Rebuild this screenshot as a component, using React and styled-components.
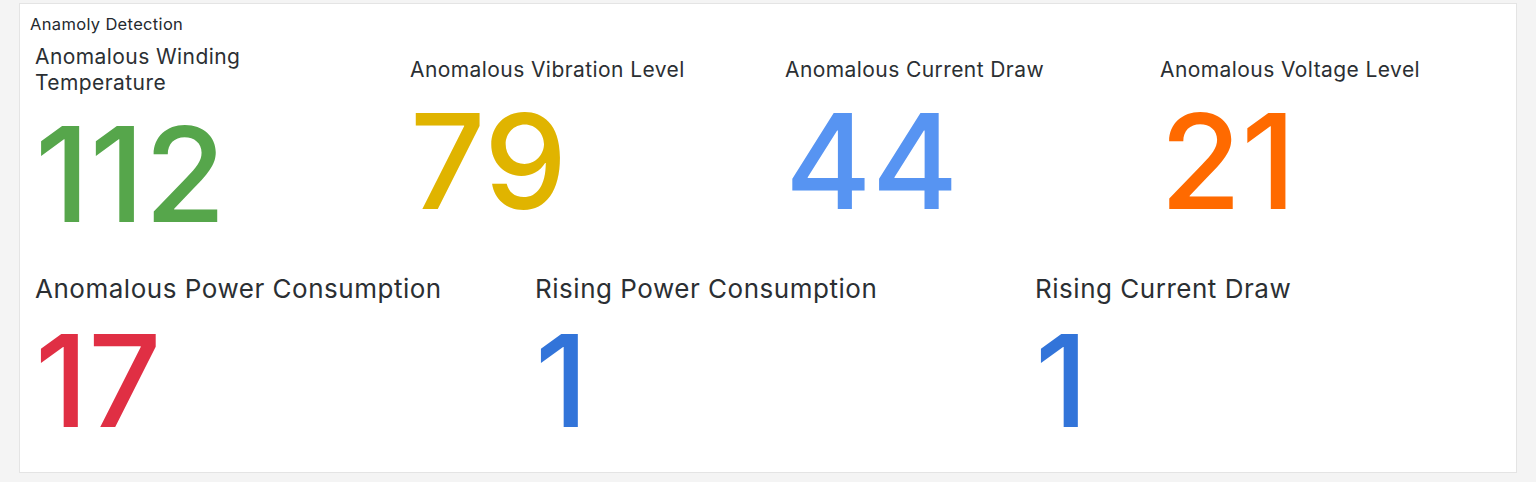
import styled, { createGlobalStyle } from 'styled-components';

const GlobalStyle = createGlobalStyle`
    html, body {
        margin: 0;
        padding: 0;
        background: #f4f4f4;
    }
    body {
        font-family: Inter, "Noto Sans", "Liberation Sans", sans-serif;
        color: #24292e;
    }
`;

const Page = styled.div`
    height: 482px;
    padding: 3px 0 0 19px;
    box-sizing: border-box;
    background: #f4f4f4;
`;

const Panel = styled.section`
    width: 1498px;
    height: 470px;
    box-sizing: border-box;
    background: #ffffff;
    border: 1px solid #e4e4e4;
    display: flex;
    flex-direction: column;
`;

const Title = styled.h2`
    margin: 0;
    padding: 10px 0 0 10px;
    height: 30px;
    box-sizing: border-box;
    font-size: 16.5px;
    line-height: 20px;
    font-weight: 400;
    letter-spacing: 0.02em;
    color: #24292e;
`;

const Row = styled.div`
    display: grid;
    grid-template-columns: repeat(${p => p.cols}, ${p => 1500 / p.cols}px);
    height: ${p => p.height}px;
    align-items: center;
    padding-left: 15px;
`;

const Tile = styled.div`
    display: flex;
    flex-direction: column;
    gap: ${p => p.gap}px;
`;

const Label = styled.div`
    font-size: ${p => p.size}px;
    line-height: 1.2;
    letter-spacing: 0.02em;
    color: #2b2f33;
    max-width: ${p => p.maxWidth || 'none'};
`;

const Value = styled.div`
    font-size: ${p => p.size}px;
    line-height: 1;
    font-weight: 500;
    color: ${p => p.color};
`;

const topRow = [
    { label: 'Anomalous Winding Temperature', value: 112, color: '#56a64b', maxWidth: '250px' },
    { label: 'Anomalous Vibration Level', value: 79, color: '#e0b400' },
    { label: 'Anomalous Current Draw', value: 44, color: '#5794f2' },
    { label: 'Anomalous Voltage Level', value: 21, color: '#ff6a00' },
];

const bottomRow = [
    { label: 'Anomalous Power Consumption', value: 17, color: '#e02f44' },
    { label: 'Rising Power Consumption', value: 1, color: '#3274d9' },
    { label: 'Rising Current Draw', value: 1, color: '#3274d9' },
];

const App = () => {
    return (
        <Page>
            <GlobalStyle />
            <Panel>
                <Title>Anamoly Detection</Title>
                <Row cols={4} height={216}>
                    {topRow.map(s => (
                        <Tile key={s.label} gap={13}>
                            <Label size={21} maxWidth={s.maxWidth}>{s.label}</Label>
                            <Value size={132} color={s.color}>{s.value}</Value>
                        </Tile>
                    ))}
                </Row>
                <Row cols={3} height={218}>
                    {bottomRow.map(s => (
                        <Tile key={s.label} gap={13}>
                            <Label size={26}>{s.label}</Label>
                            <Value size={128} color={s.color}>{s.value}</Value>
                        </Tile>
                    ))}
                </Row>
            </Panel>
        </Page>
    );
}

export default App;
